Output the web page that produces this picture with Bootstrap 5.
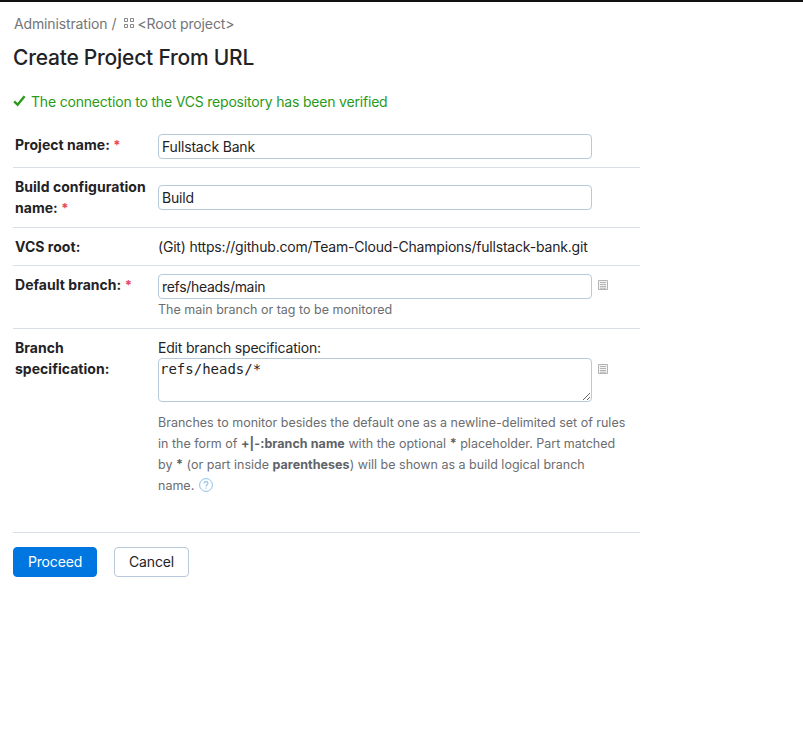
<!DOCTYPE html>
<html lang="en">
<head>
<meta charset="utf-8">
<meta name="viewport" content="width=device-width, initial-scale=1">
<title>Create Project From URL</title>
<link href="https://cdn.jsdelivr.net/npm/bootstrap@5.3.0/dist/css/bootstrap.min.css" rel="stylesheet">
<style>
body{font-family:Inter,"Liberation Sans",sans-serif;font-size:14px;line-height:21px;letter-spacing:-.19px;color:#1f2326;background:#fff}
.page-top{border-top:2px solid #111;padding:10px 13px 0}
.crumbs{color:#737577;height:22px;padding-left:1px;letter-spacing:-.13px}
.root-name{margin-left:3px}
.page-title{font-size:21px;line-height:28px;font-weight:500;letter-spacing:-.23px;margin:10px 0 0}
.verified{color:#2a9a1a;margin:18px 0 0;height:22px}
.verified-text{margin-left:5px}
.form-area{width:627px;margin-top:15px}
.form-line{border-bottom:1px solid #dadfe8}
.caption-cell{width:145px;flex:none;padding:8px 0 0 2px;font-weight:700;letter-spacing:.03px}
.req{color:#e5485d;font-size:13px}
.field-cell{width:434px;flex:none}
.form-control.box{height:25px;padding:0 3px;border:1px solid #b8c9d9;border-radius:4px;font-size:14px;line-height:21px;letter-spacing:-.17px;color:#1f2326}
.form-control.area{display:block;height:44px;min-height:0;padding:1px;font-family:"DejaVu Sans Mono",monospace;line-height:19px;letter-spacing:0}
.branch-box.form-control.box{letter-spacing:-.3px}
.hint{font-size:12.5px;line-height:21px;letter-spacing:0;color:#6b6d70}
.hint b{font-weight:700;letter-spacing:.06px;color:#606468}
.rules-hint{margin-top:10px}
.help-ico{margin-left:1px;margin-top:-3px}
.list-ico{margin-left:6px;flex:none}
.list-ico.upper{margin-top:14px}
.list-ico.lower{margin-top:35px}
.btn.act{height:30px;padding:0;font-size:14px;line-height:28px;letter-spacing:-.17px;border-radius:4px}
.btn.go{background:#0077e0;border-color:#0077e0;color:#fff;width:84px}
.btn.no{border-color:#b8c9d9;color:#1f2326;width:75px;margin-left:17px}
.actions{margin-top:14px}
.r1{height:42px;margin-top:-1px}.r2{height:60px}.r3{height:38px}.r4{height:63px}.r5{height:204px}
.r2 .field-cell{padding-top:17px}
</style>
<script src="https://cdn.jsdelivr.net/npm/bootstrap@5.3.0/dist/js/bootstrap.bundle.min.js"></script>
</head>
<body>
<svg class="d-none">
  <symbol id="list" viewBox="0 0 10 10"><path d="M.5.5h9v9h-9z" fill="#f3f3f3" stroke="#b4b4b4"/><path d="M2 2.5h6M2 4.5h6M2 6.5h6M2 8.2h6" stroke="#b4b4b4"/></symbol>
</svg>
<main class="page-top">
  <nav class="crumbs d-flex align-items-center"><span>Administration</span><span class="ms-1">/</span>
    <svg class="ms-2" width="10" height="10" viewBox="0 0 10 10" fill="none" stroke="#858789"><path d="M.5.5h3v3h-3zM6.5.5h3v3h-3zM.5 6.5h3v3h-3zM6.5 6.5h3v3h-3z"/></svg>
    <span class="root-name">&lt;Root project&gt;</span></nav>
  <h1 class="page-title">Create Project From URL</h1>
  <div class="verified d-flex align-items-center">
    <svg width="13" height="12" viewBox="0 0 13 12" fill="none" stroke="#2a9a1a" stroke-width="2.4"><path d="M1.2 6.4 4.6 9.8 11.6 1.2"/></svg>
    <span class="verified-text">The connection to the VCS repository has been verified</span></div>
  <form class="form-area">
    <div class="form-line r1 d-flex">
      <label class="caption-cell">Project name: <span class="req">*</span></label>
      <div class="field-cell pt-2"><input class="form-control box" value="Fullstack Bank"></div>
    </div>
    <div class="form-line r2 d-flex">
      <label class="caption-cell">Build configuration name: <span class="req">*</span></label>
      <div class="field-cell"><input class="form-control box" value="Build"></div>
    </div>
    <div class="form-line r3 d-flex">
      <div class="caption-cell">VCS root:</div>
      <div class="pt-2 text-nowrap">(Git) https://github.com/Team-Cloud-Champions/fullstack-bank.git</div>
    </div>
    <div class="form-line r4 d-flex">
      <label class="caption-cell">Default branch: <span class="req">*</span></label>
      <div class="field-cell pt-2"><input class="form-control box branch-box" value="refs/heads/main"><div class="hint">The main branch or tag to be monitored</div></div>
      <svg class="list-ico upper" width="10" height="10"><use href="#list"/></svg>
    </div>
    <div class="form-line r5 d-flex">
      <div class="caption-cell">Branch specification:</div>
      <div class="field-cell pt-2"><div>Edit branch specification:</div>
        <textarea class="form-control box area">refs/heads/*</textarea>
        <div class="hint rules-hint text-nowrap">Branches to monitor besides the default one as a newline-delimited set of rules<br>in the form of <b>+|-:branch name</b> with the optional <b>*</b> placeholder. Part matched<br>by <b>*</b> (or part inside <b>parentheses</b>) will be shown as a build logical branch<br>name. <svg class="help-ico" width="14" height="14" viewBox="0 0 14 14" fill="none" stroke="#8fbfe6"><circle cx="7" cy="7" r="6.4"/><path d="M5 5.4C5 3 9 3 9 5.3 9 6.8 7 6.7 7 8.4M7 9.6v1.2" stroke-width="1.1"/></svg></div>
      </div>
      <svg class="list-ico lower" width="10" height="10"><use href="#list"/></svg>
    </div>
    <div class="actions d-flex"><button type="button" class="btn act go">Proceed</button><button type="button" class="btn act no">Cancel</button></div>
  </form>
</main>
</body>
</html>
